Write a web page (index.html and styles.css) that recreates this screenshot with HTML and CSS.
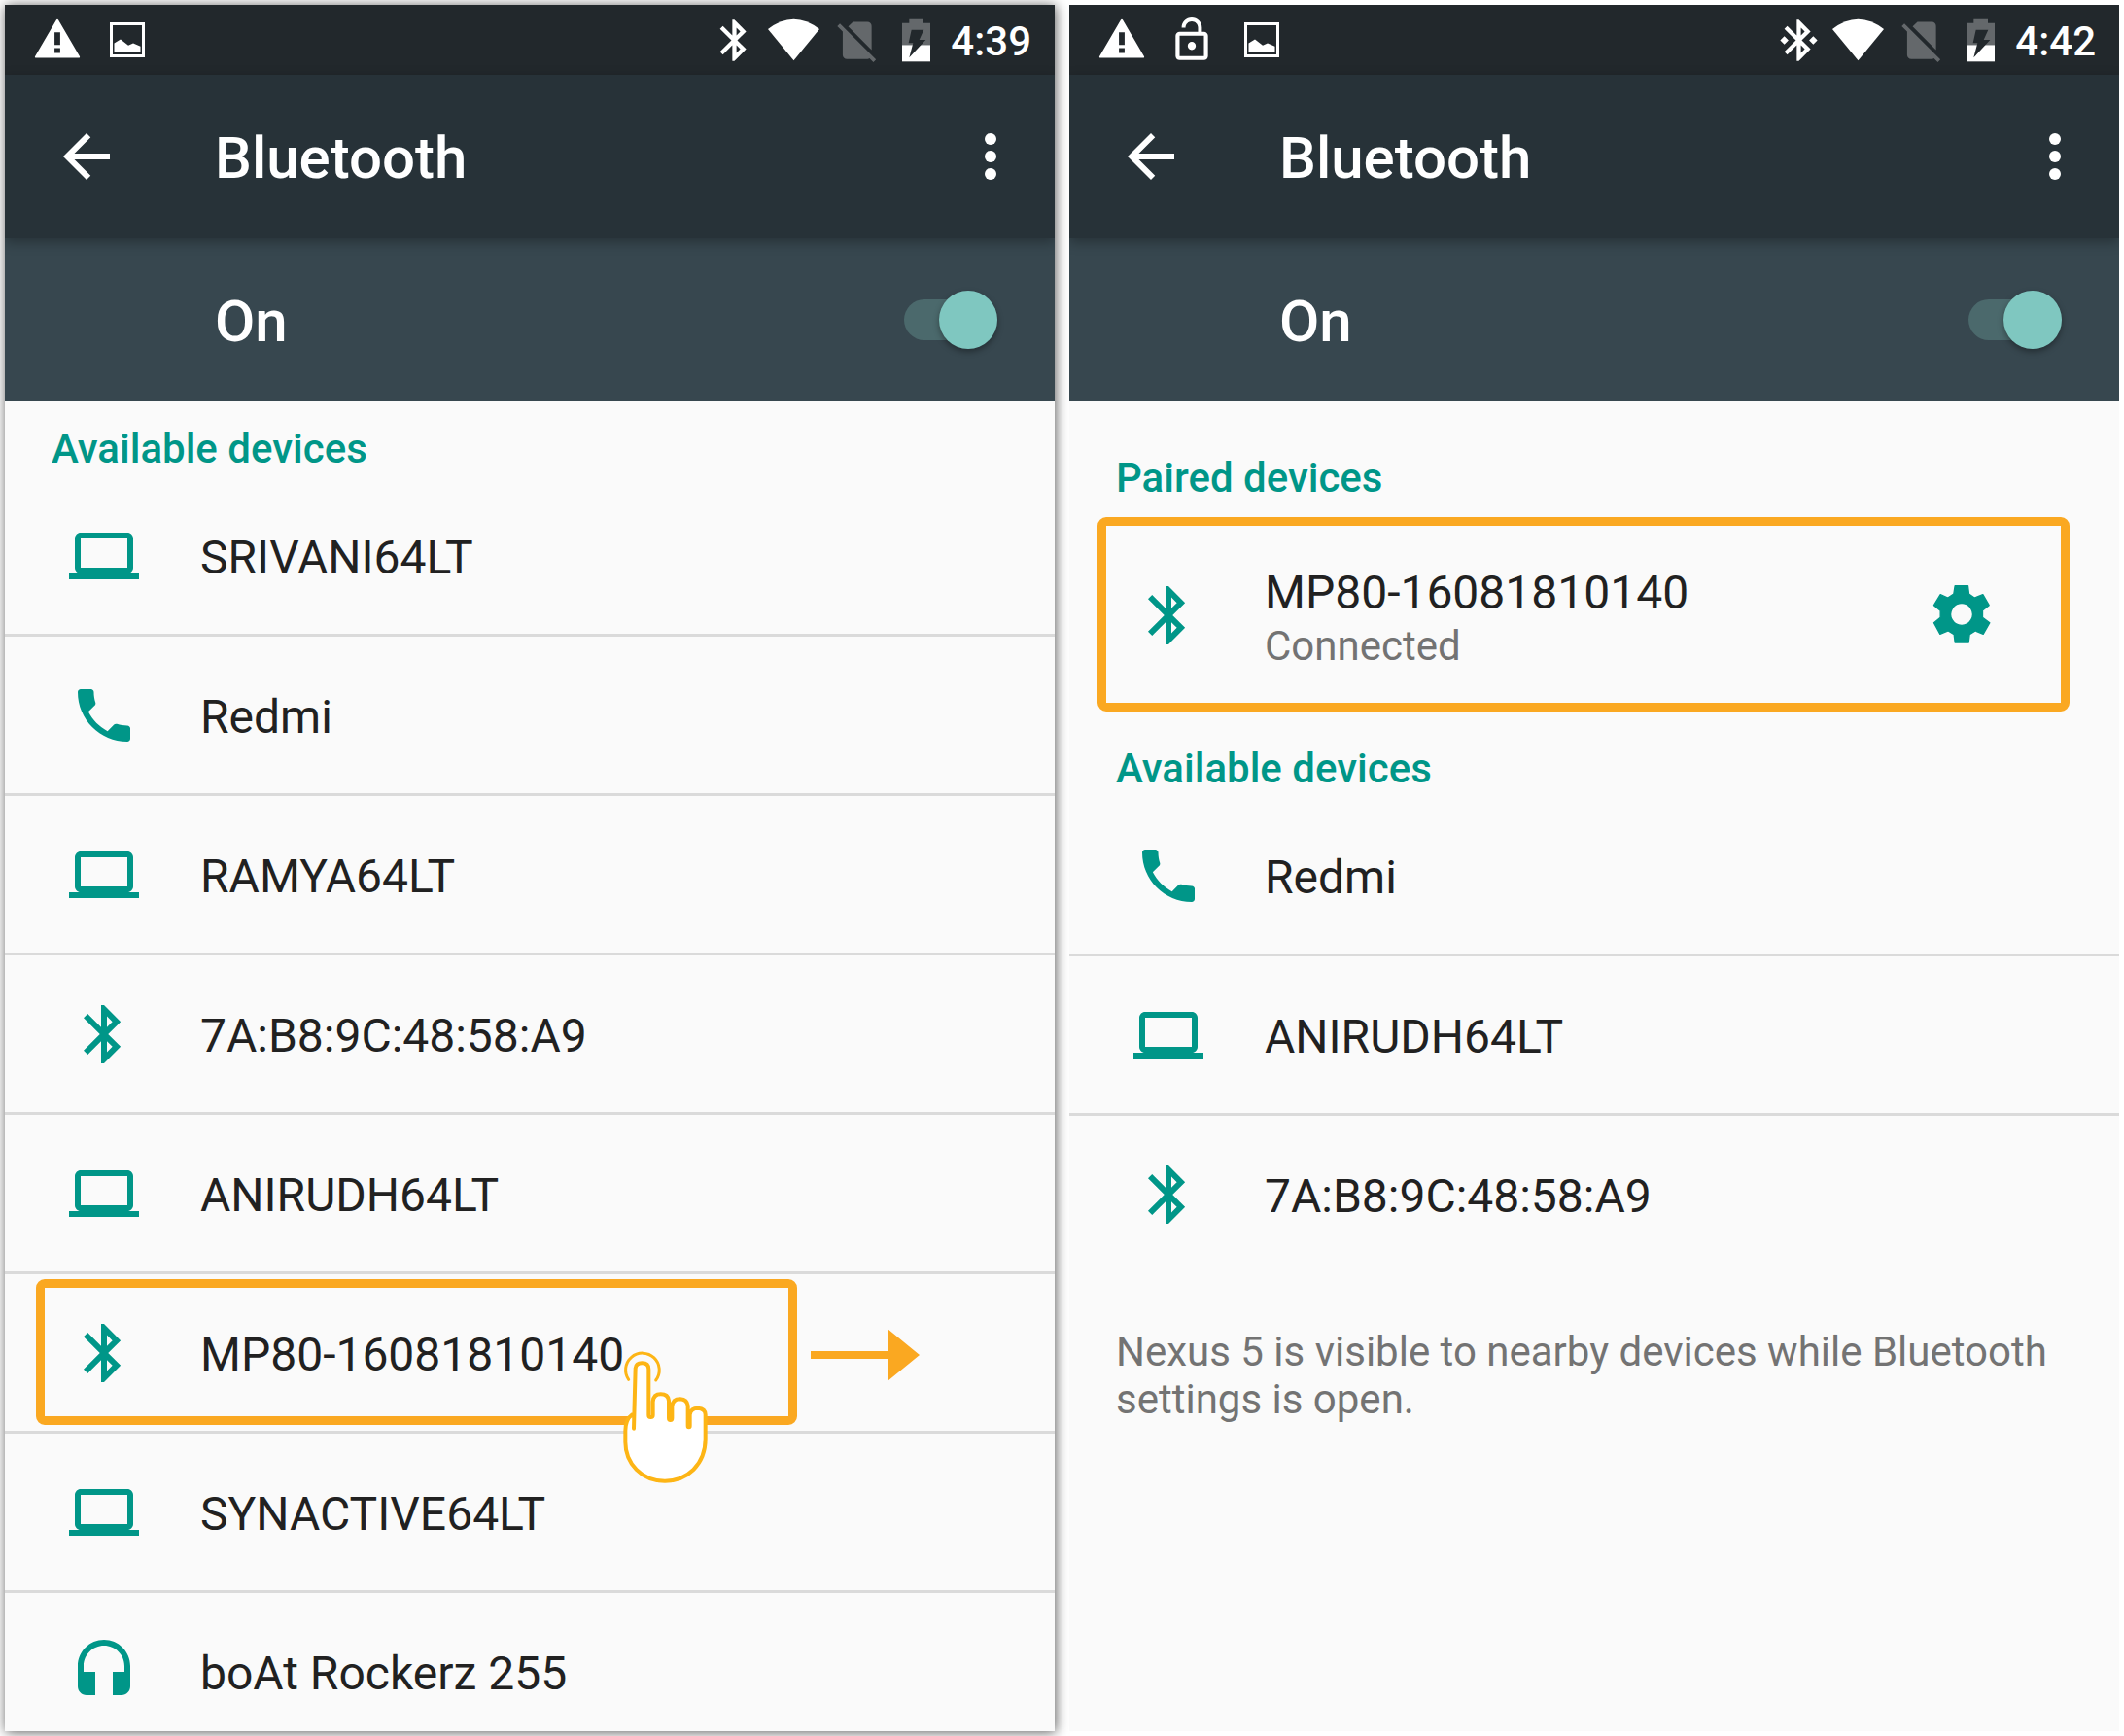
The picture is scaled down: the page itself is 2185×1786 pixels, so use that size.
FILE: index.html
```html
<!DOCTYPE html>
<html lang="en">
<head>
<meta charset="utf-8">
<meta name="viewport" content="width=device-width, initial-scale=1">
<title>Bluetooth</title>
<link rel="stylesheet" href="styles.css">
</head>
<body>
<svg class="sprite" aria-hidden="true">
  <symbol id="warning" viewBox="0 0 24 24"><path d="M1.4 20.9h21.2a.5.5 0 0 0 .4-.8L12.500 2.200a.6.6 0 0 0-1 0L1 20.100a.5.5 0 0 0 .4.800zM10.600 8.300h2.800v6.200h-2.800zM10.600 16.100h2.800v2.400h-2.800z" fill-rule="evenodd"/></symbol>
  <symbol id="lock-open" viewBox="0 0 24 24"><path d="M12 17c1.100 0 2-.9 2-2s-.9-2-2-2-2 .9-2 2 .9 2 2 2zm6-9h-1V6c0-2.760-2.240-5-5-5S7 3.240 7 6h1.900c0-1.710 1.390-3.100 3.100-3.100s3.100 1.390 3.100 3.100v2H6c-1.100 0-2 .9-2 2v10c0 1.100.9 2 2 2h12c1.100 0 2-.9 2-2V10c0-1.100-.9-2-2-2zm0 12H6V10h12v10z"/></symbol>
  <symbol id="picture" viewBox="0 0 50 50"><path d="M8.500 8.500h33v33h-33z" fill="none" stroke="currentColor" stroke-width="3"/><path d="M11.500 28.500 18 24.500 26 30.700 31 28.500 38.500 31.700V37.700h-27z"/></symbol>
  <symbol id="bt" viewBox="0 0 24 24"><path d="M17.710 7.710 12 2h-1v7.590L6.410 5 5 6.410 10.590 12 5 17.590 6.410 19 11 14.410V22h1l5.710-5.710-4.300-4.290zM13 5.830l1.880 1.880L13 9.590zm1.880 10.460L13 18.170v-3.760z"/></symbol>
  <symbol id="bt-status" viewBox="0 0 22.600 24"><path d="M17.710 7.710 12 2h-1v7.590L6.410 5 5 6.410 10.590 12 5 17.590 6.410 19 11 14.410V22h1l5.710-5.710-4.300-4.290zM13 5.830l1.880 1.880L13 9.590zm1.880 10.460L13 18.170v-3.760z"/></symbol>
  <symbol id="bt-connected" viewBox="0 0 22.600 24"><path d="M17.710 7.710 12 2h-1v7.590L6.410 5 5 6.410 10.590 12 5 17.590 6.410 19 11 14.410V22h1l5.710-5.710-4.300-4.290zM13 5.830l1.880 1.880L13 9.590zm1.880 10.460L13 18.170v-3.760zM7 12l-2-2-2 2 2 2zm12-2-2 2 2 2 2-2z"/></symbol>
  <symbol id="wifi" viewBox="270 46 160 153"><path d="M270 88Q350 26 430 88L350 185z"/></symbol>
  <symbol id="no-sim" viewBox="-.6 0 28.700 24"><path d="M18.990 5c0-1.100-.89-2-1.990-2h-7L7.660 5.340 19 16.680zM3.650 3.880 2.380 5.150 5 7.770V19c0 1.100.9 2 2 2h10.010c.35 0 .67-.1.960-.26l1.880 1.880 1.270-1.270z"/></symbol>
  <symbol id="battery" viewBox="684 46 114 153"><path d="M706 57h44v12h21v68h-87V69h22z" fill="#64686b"/><path d="M684 137h87v51h-87z"/><path d="M713 90h38l-14 31h20l-51 55 12-45h-14z" fill="#22282c"/></symbol>
  <symbol id="back" viewBox="0 0 24 24"><path d="M20 11H7.830l5.590-5.590L12 4l-8 8 8 8 1.410-1.410L7.830 13H20z"/></symbol>
  <symbol id="more" viewBox="0 0 24 24"><circle cx="12" cy="6" r="2"/><circle cx="12" cy="12" r="2"/><circle cx="12" cy="18" r="2"/></symbol>
  <symbol id="laptop" viewBox="0 0 24 24"><path d="M20 18c1.100 0 2-.9 2-2V6c0-1.100-.9-2-2-2H4c-1.100 0-2 .9-2 2v10c0 1.100.9 2 2 2H0v2h24v-2zM4 6h16v10H4z"/></symbol>
  <symbol id="phone" viewBox="0 0 24 24"><path d="M6.620 10.790c1.440 2.830 3.760 5.140 6.590 6.590l2.200-2.200c.27-.27.670-.36 1.020-.24 1.120.37 2.330.57 3.570.57.550 0 1 .45 1 1V20c0 .55-.45 1-1 1-9.390 0-17-7.610-17-17 0-.55.450-1 1-1h3.500c.55 0 1 .45 1 1 0 1.250.2 2.450.57 3.570.110.350.030.740-.25 1.020z"/></symbol>
  <symbol id="headset" viewBox="0 0 24 24"><path d="M12 1c-4.970 0-9 4.030-9 9v7c0 1.660 1.340 3 3 3h3v-8H5v-2c0-3.870 3.130-7 7-7s7 3.130 7 7v2h-4v8h3c1.660 0 3-1.340 3-3v-7c0-4.970-4.030-9-9-9z"/></symbol>
  <symbol id="gear" viewBox="246.500 282 216 216"><path fill-rule="evenodd" stroke="currentColor" stroke-width="4" stroke-linejoin="round" d="M334 302H374L377 327 394 339 420 329 439 362 419 378V400L441 416 421 451 397 441 379 452 376 477H334L331 452 313 441 288 451 269 416 289 400V379L269 362 289 329 312 339 330 327ZM354.500 356a34 34 0 1 0 .1 0z"/></symbol>
</svg>

<main class="screens">
  <section class="screen screen-raised" aria-label="Choose a device">
    <div class="status-bar">
      <div class="notifications">
        <svg class="notice"><use href="#warning"/></svg>
        <svg class="notice"><use href="#picture"/></svg>
      </div>
      <div class="system">
        <svg class="sys-bt"><use href="#bt-status"/></svg>
        <svg class="sys-wifi"><use href="#wifi"/></svg>
        <svg class="sys-sim"><use href="#no-sim"/></svg>
        <svg class="sys-battery"><use href="#battery"/></svg>
        <time class="clock">4:39</time>
      </div>
    </div>
    <header class="app-bar">
      <button class="icon-button" aria-label="Back"><svg class="icon"><use href="#back"/></svg></button>
      <h1 class="title">Bluetooth</h1>
      <button class="icon-button" aria-label="More options"><svg class="icon"><use href="#more"/></svg></button>
    </header>
    <div class="switch-bar">
      <label class="title" for="bt-switch-1">On</label>
      <input class="switch" id="bt-switch-1" type="checkbox" role="switch" checked>
    </div>
    <div class="content">
      <h2 class="category">Available devices</h2>
      <ul class="devices">
        <li class="device"><button class="device-main"><svg class="icon"><use href="#laptop"/></svg><span class="name">SRIVANI64LT</span></button></li>
        <li class="device"><button class="device-main"><svg class="icon"><use href="#phone"/></svg><span class="name">Redmi</span></button></li>
        <li class="device"><button class="device-main"><svg class="icon"><use href="#laptop"/></svg><span class="name">RAMYA64LT</span></button></li>
        <li class="device"><button class="device-main"><svg class="icon"><use href="#bt"/></svg><span class="name">7A:B8:9C:48:58:A9</span></button></li>
        <li class="device"><button class="device-main"><svg class="icon"><use href="#laptop"/></svg><span class="name">ANIRUDH64LT</span></button></li>
        <li class="device">
          <button class="device-main"><svg class="icon"><use href="#bt"/></svg><span class="name">MP80-16081810140</span></button>
          <span class="highlight highlight-tap"></span>
          <svg class="arrow" viewBox="0 0 112 54" aria-hidden="true"><path d="M0 23H79V0L112 27 79 54V31H0z"/></svg>
          <svg class="hand" viewBox="240 296 270 417" aria-hidden="true">
            <path d="M260 387A52 52 0 1 1 344 389" fill="none" stroke-width="9"/>
            <path d="M276 538 281 352Q283 336 301 336 322 336 322 355V497Q322 503 328 503 335 503 335 497V455Q337 432 359 432 382 432 384 452V506Q384 512 389 512 394 512 394 506V470Q396 447 419 447 441 449 443 468V530Q443 534 446 534 449 534 449 530V495Q452 475 474 475 497 477 497 495V570C497 650 440 700 372 700 300 700 250 645 250 580V545Q250 510 271 495" stroke-width="12"/>
          </svg>
        </li>
        <li class="device"><button class="device-main"><svg class="icon"><use href="#laptop"/></svg><span class="name">SYNACTIVE64LT</span></button></li>
        <li class="device"><button class="device-main"><svg class="icon"><use href="#headset"/></svg><span class="name">boAt Rockerz 255</span></button></li>
      </ul>
    </div>
  </section>

  <section class="screen" aria-label="Device connected">
    <div class="status-bar">
      <div class="notifications">
        <svg class="notice"><use href="#warning"/></svg>
        <svg class="notice"><use href="#lock-open"/></svg>
        <svg class="notice"><use href="#picture"/></svg>
      </div>
      <div class="system">
        <svg class="sys-bt"><use href="#bt-connected"/></svg>
        <svg class="sys-wifi"><use href="#wifi"/></svg>
        <svg class="sys-sim"><use href="#no-sim"/></svg>
        <svg class="sys-battery"><use href="#battery"/></svg>
        <time class="clock">4:42</time>
      </div>
    </div>
    <header class="app-bar">
      <button class="icon-button" aria-label="Back"><svg class="icon"><use href="#back"/></svg></button>
      <h1 class="title">Bluetooth</h1>
      <button class="icon-button" aria-label="More options"><svg class="icon"><use href="#more"/></svg></button>
    </header>
    <div class="switch-bar">
      <label class="title" for="bt-switch-2">On</label>
      <input class="switch" id="bt-switch-2" type="checkbox" role="switch" checked>
    </div>
    <div class="content content-top">
      <h2 class="category">Paired devices</h2>
      <ul class="devices">
        <li class="device device-paired">
          <button class="device-main"><svg class="icon"><use href="#bt"/></svg><span class="name">MP80-16081810140<span class="state">Connected</span></span></button>
          <button class="icon-button device-settings" aria-label="Device settings"><svg class="icon"><use href="#gear"/></svg></button>
          <span class="highlight highlight-row"></span>
        </li>
      </ul>
      <h2 class="category">Available devices</h2>
      <ul class="devices">
        <li class="device"><button class="device-main"><svg class="icon"><use href="#phone"/></svg><span class="name">Redmi</span></button></li>
        <li class="device"><button class="device-main"><svg class="icon"><use href="#laptop"/></svg><span class="name">ANIRUDH64LT</span></button></li>
        <li class="device"><button class="device-main"><svg class="icon"><use href="#bt"/></svg><span class="name">7A:B8:9C:48:58:A9</span></button></li>
      </ul>
      <p class="footnote">Nexus 5 is visible to nearby devices while Bluetooth settings is open.</p>
    </div>
  </section>
</main>
</body>
</html>
```

FILE: styles.css
```css
*,
*::before {
  box-sizing: border-box;
}

body {
  margin: 0;
  background: #fff;
  color: #212121;
  font-family: Roboto, "Liberation Sans", sans-serif;
}

h1,
h2,
p,
ul {
  margin: 0;
  padding: 0;
}

ul {
  list-style: none;
}

button {
  padding: 0;
  border: 0;
  background: none;
  color: inherit;
  font: inherit;
  text-align: left;
  cursor: pointer;
}

svg {
  display: block;
  flex: none;
  fill: currentColor;
}

.sprite {
  position: absolute;
  width: 0;
  height: 0;
}

.screens {
  display: grid;
  grid-template-columns: repeat(2, minmax(0, 1fr));
  gap: 15px;
  padding: 5px;
}

.screen {
  display: flex;
  flex-direction: column;
  aspect-ratio: 1080 / 1776;
  min-height: 0;
  overflow: hidden;
  background: #fafafa;
}

.screen-raised {
  box-shadow: 1px 1px 12px rgba(0, 0, 0, 0.65);
}

/* Status bar */

.status-bar {
  display: flex;
  flex: none;
  align-items: center;
  justify-content: space-between;
  height: 72px;
  padding: 0 24px 0 29px;
  background: #22282c;
  color: #fff;
}

.notifications {
  display: flex;
  gap: 22px;
}

.notice {
  width: 50px;
  height: 50px;
}

.system {
  display: flex;
  align-items: center;
  gap: 12px;
}

.sys-bt {
  width: 48px;
  height: 51px;
}

.sys-wifi {
  width: 53px;
  height: 51px;
}

.sys-sim {
  width: 61px;
  height: 51px;
  color: #64686b;
}

.sys-battery {
  width: 38px;
  height: 51px;
}

.clock {
  padding-top: 4px;
  font-size: 42px;
  line-height: 48px;
  font-weight: 500;
}

/* App bar and master switch */

.app-bar,
.switch-bar {
  display: flex;
  flex: none;
  align-items: center;
  height: 168px;
  color: #fff;
}

.app-bar {
  position: relative;
  gap: 96px;
  padding: 0 30px 0 48px;
  background: #273238;
  box-shadow: 0 4px 12px rgba(0, 0, 0, 0.3);
}

.switch-bar {
  padding: 0 59px 0 216px;
  background: #37474f;
}

.title {
  flex: 1;
  padding-top: 4px;
  font-size: 60px;
  line-height: 70px;
  font-weight: 500;
}

.icon {
  width: 72px;
  height: 72px;
}

.switch {
  display: flex;
  align-items: center;
  justify-content: flex-start;
  width: 96px;
  height: 42px;
  margin: 0;
  border-radius: 21px;
  background: #5b6b72;
  appearance: none;
  cursor: pointer;
}

.switch::before {
  content: "";
  flex: none;
  width: 60px;
  height: 60px;
  border-radius: 50%;
  background: #bdbdbd;
  box-shadow: 0 3px 6px rgba(0, 0, 0, 0.35);
}

.switch:checked {
  justify-content: flex-end;
  background: #4b696c;
}

.switch:checked::before {
  background: #7fc7c0;
}

/* Device lists */

.content {
  flex: 1;
  min-height: 0;
  overflow-y: auto;
  scrollbar-width: none;
}

.content-top {
  padding-top: 30px;
}

.category {
  padding: 25px 48px 5px;
  color: #009688;
  font-size: 42px;
  line-height: 48px;
  font-weight: 500;
}

.device {
  position: relative;
  display: flex;
  align-items: center;
  box-sizing: content-box;
  min-height: 161px;
}

.device + .device {
  border-top: 3px solid #dadada;
}

.device-main {
  display: flex;
  flex: 1;
  align-items: center;
  gap: 63px;
  min-width: 0;
  padding-left: 66px;
}

.device .icon {
  color: #009688;
}

.name {
  padding-top: 4px;
  font-size: 48px;
  line-height: 56px;
}

.state {
  display: block;
  padding-top: 2px;
  color: #737373;
  font-size: 42px;
  line-height: 49px;
}

.device-paired {
  min-height: 221px;
}

.device-paired .device-main {
  padding-top: 3px;
}

.device-settings {
  margin-right: 126px;
}

.footnote {
  padding: 57px 48px;
  color: #737373;
  font-size: 42px;
  line-height: 49px;
}

/* Tutorial annotations laid over the lists */

.highlight {
  position: absolute;
  border: 9px solid #faa821;
  border-radius: 9px;
  pointer-events: none;
}

.highlight-tap {
  top: 5px;
  bottom: 6px;
  left: 32px;
  width: 783px;
}

.highlight-row {
  top: 11px;
  right: 51px;
  bottom: 10px;
  left: 29px;
}

.arrow {
  position: absolute;
  top: 56px;
  left: 829px;
  width: 112px;
  height: 54px;
  color: #faa821;
}

.hand {
  position: absolute;
  z-index: 1;
  top: 78px;
  left: 635px;
  width: 90px;
  height: 139px;
  fill: #fff;
  stroke: #fdb515;
  stroke-linecap: round;
  stroke-linejoin: round;
  pointer-events: none;
}
```
